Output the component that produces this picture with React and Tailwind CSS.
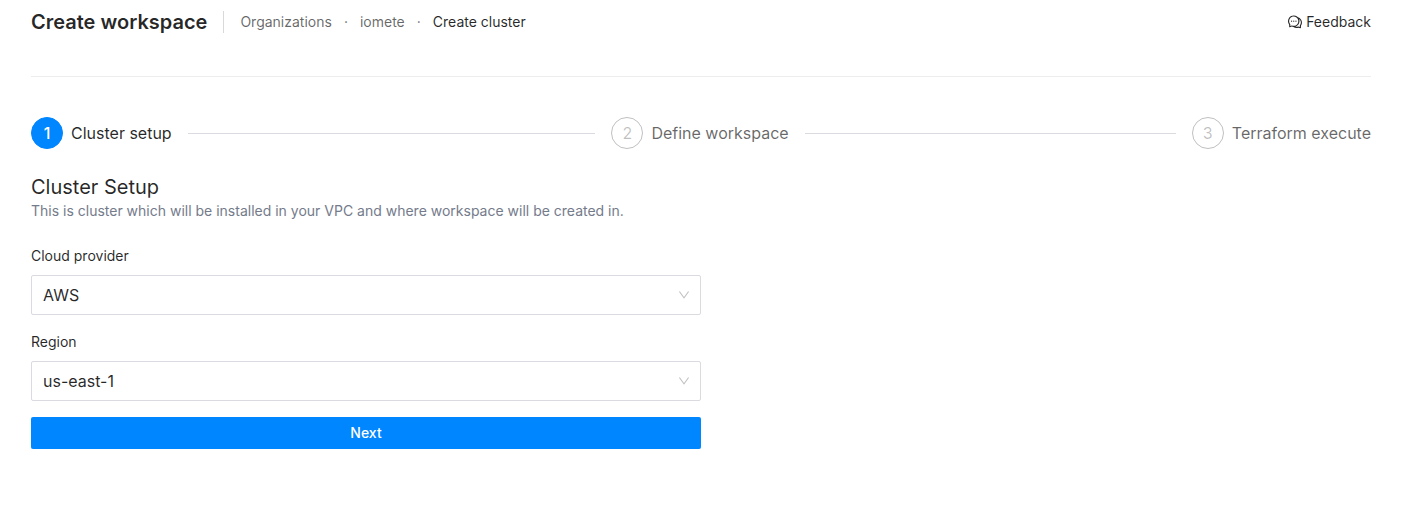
import { AiOutlineComment } from "react-icons/ai";

const steps = ["Cluster setup", "Define workspace", "Terraform execute"];

function Steps({ current }) {
  return (
    <ol className="mt-10 flex items-center gap-4">
      {steps.map((label, i) => {
        const active = i === current;
        const last = i === steps.length - 1;
        return (
          <li key={label} className={last ? "flex items-center gap-2" : "flex flex-1 items-center gap-2"}>
            <span
              className={
                active
                  ? "flex size-8 shrink-0 items-center justify-center rounded-full border border-[#0086ff] bg-[#0086ff] text-base font-medium text-white"
                  : "flex size-8 shrink-0 items-center justify-center rounded-full border border-black/25 text-base text-black/25"
              }
            >
              {i + 1}
            </span>
            <span className={active ? "whitespace-nowrap text-base text-black/85" : "whitespace-nowrap text-base text-black/60"}>
              {label}
            </span>
            {!last && <span className="ml-2 h-px flex-1 bg-[#d9dbe0]" />}
          </li>
        );
      })}
    </ol>
  );
}

function SelectField({ id, label, options }) {
  return (
    <div className="mb-4">
      <label htmlFor={id} className="mb-2 block text-sm leading-[22px]">
        {label}
      </label>
      <div className="relative">
        <select
          id={id}
          className="block h-10 w-full appearance-none rounded-xs border border-[#d9dbe0] bg-white pr-8 pl-[11px] text-base text-black/85"
        >
          {options.map((option) => (
            <option key={option}>{option}</option>
          ))}
        </select>
        <svg
          viewBox="64 64 896 896"
          fill="currentColor"
          className="pointer-events-none absolute top-[14px] right-[11px] size-3 text-black/25"
          aria-hidden="true"
        >
          <path d="M884 256h-75c-5.100 0-9.900 2.500-12.900 6.600L512 654.200 227.900 262.600c-3-4.100-7.800-6.600-12.900-6.600h-75c-6.500 0-10.300 7.400-6.500 12.700l352.600 486.100c12.800 17.600 39 17.600 51.700 0l352.600-486.100c3.900-5.300.1-12.700-6.400-12.700z" />
        </svg>
      </div>
    </div>
  );
}

export default function App() {
  return (
    <div className="pt-1.5 pr-[30px] pl-[31px] font-[Inter,sans-serif] text-sm text-black/85">
      <header className="flex items-center justify-between border-b border-[#ededed] pb-[38px]">
        <div className="flex items-center">
          <h1 className="text-xl leading-8 font-semibold">Create workspace</h1>
          <span className="mx-4 h-[22px] w-px bg-[#d9d9d9]" />
          <nav aria-label="Breadcrumb">
            <ol className="flex items-center text-black/60">
              <li><a href="#organizations">Organizations</a></li>
              <li aria-hidden="true" className="mx-3">·</li>
              <li><a href="#iomete">iomete</a></li>
              <li aria-hidden="true" className="mx-3">·</li>
              <li className="text-black/85">Create cluster</li>
            </ol>
          </nav>
        </div>
        <a href="#feedback" className="flex items-center gap-[3px]">
          <AiOutlineComment className="size-4" />
          Feedback
        </a>
      </header>
      <main>
        <Steps current={0} />
        <section className="mt-6 w-1/2">
          <h2 className="text-xl leading-7">Cluster Setup</h2>
          <p className="leading-5 text-[#747b8b]">
            This is cluster which will be installed in your VPC and where workspace will be created in.
          </p>
          <form className="mt-6" onSubmit={(e) => e.preventDefault()}>
            <SelectField id="provider" label="Cloud provider" options={["AWS"]} />
            <SelectField id="region" label="Region" options={["us-east-1"]} />
            <button type="submit" className="block h-8 w-full rounded-xs bg-[#0086ff] text-sm font-medium text-white shadow-[0_2px_0_rgba(0,0,0,0.04)]">
              Next
            </button>
          </form>
        </section>
      </main>
    </div>
  );
}
